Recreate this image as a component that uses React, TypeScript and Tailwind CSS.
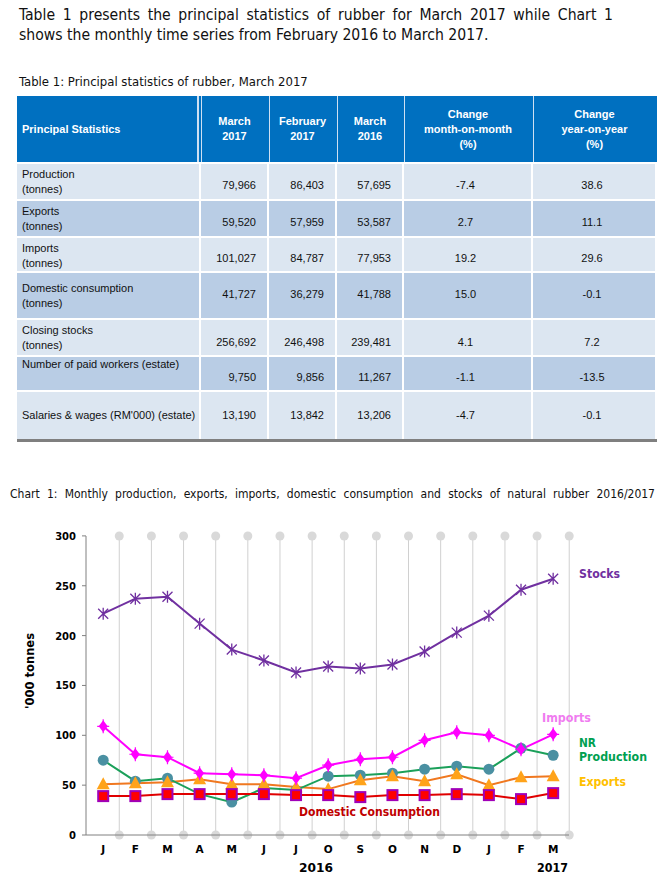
import React from "react";

const TAHOMA = "font-['DejaVu_Sans_Condensed','DejaVu_Sans',sans-serif]";
const ARIAL = "font-['Liberation_Sans',Arial,sans-serif]";

type Row = {
  label: string[];
  vals: string[];
  bg: string;
  h: string;
  lp: string;
  np: string;
};

const rows: Row[] = [
  { label: ["Production", "(tonnes)"], vals: ["79,966", "86,403", "57,695", "-7.4", "38.6"], bg: "bg-[#dce6f1]", h: "h-[35px]", lp: "pt-[3px]", np: "pt-[14px]" },
  { label: ["Exports", "(tonnes)"], vals: ["59,520", "57,959", "53,587", "2.7", "11.1"], bg: "bg-[#b9cde5]", h: "h-[35px]", lp: "pt-[3px]", np: "pt-[14px]" },
  { label: ["Imports", "(tonnes)"], vals: ["101,027", "84,787", "77,953", "19.2", "29.6"], bg: "bg-[#dce6f1]", h: "h-[33px]", lp: "pt-[3px]", np: "pt-[13px]" },
  { label: ["Domestic consumption", "(tonnes)"], vals: ["41,727", "36,279", "41,788", "15.0", "-0.1"], bg: "bg-[#b9cde5]", h: "h-[45px]", lp: "pt-[8px]", np: "pt-[14px]" },
  { label: ["Closing stocks", "(tonnes)"], vals: ["256,692", "246,498", "239,481", "4.1", "7.2"], bg: "bg-[#dce6f1]", h: "h-[35px]", lp: "pt-[3px]", np: "pt-[15px]" },
  { label: ["Number of paid workers (estate)"], vals: ["9,750", "9,856", "11,267", "-1.1", "-13.5"], bg: "bg-[#b9cde5]", h: "h-[33px]", lp: "pt-[0px]", np: "pt-[13px]" },
  { label: ["Salaries & wages (RM'000) (estate)"], vals: ["13,190", "13,842", "13,206", "-4.7", "-0.1"], bg: "bg-[#dce6f1]", h: "h-[47px]", lp: "pt-[16px]", np: "pt-[16px]" },
];

const COLS = "grid grid-cols-[182px_66px_66px_65px_127px_122px] gap-x-[2px]";

function StatsTable() {
  return (
    <div className={`ml-[17px] w-[640px] ${ARIAL} text-[11px] leading-[15px]`}>
      <div className="flex flex-col gap-y-[2px] bg-white">
        <div className={`${COLS} h-[66px] bg-[#0070c0] gap-x-[2px]`}>
          <div className="flex items-center pl-[5px] font-bold text-white bg-[#0070c0] border-r-2 border-[#cfe0f2]">Principal Statistics</div>
          {[["March", "2017"], ["February", "2017"], ["March", "2016"], ["Change", "month-on-month", "(%)"], ["Change", "year-on-year", "(%)"]].map((h, i) => (
            <div key={i} className="flex flex-col items-center justify-center text-center font-bold text-white border-l border-[#cfe0f2]">
              {h.map((t) => (
                <span key={t}>{t}</span>
              ))}
            </div>
          ))}
        </div>
        {rows.map((r) => (
          <div key={r.label[0]} className={`${COLS} ${r.h} text-[#111]`}>
            <div className={`${r.bg} pl-[5px] ${r.lp} flex flex-col`}>
              {r.label.map((l) => (
                <span key={l}>{l}</span>
              ))}
            </div>
            {r.vals.map((v, i) => (
              <div key={i} className={`${r.bg} ${r.np} ${i < 3 ? "text-right pr-[11px]" : "text-center pr-[4px]"}`}>
                {v}
              </div>
            ))}
          </div>
        ))}
      </div>
      <div className="h-[3px] bg-[#7f7f7f]" />
    </div>
  );
}

const X0 = 103.2;
const DX = 32.14;
const Y0 = 834;
const px = (i: number) => X0 + DX * i;
const py = (v: number) => Y0 - v * 0.997;

const stocks = [222, 237, 239, 212, 186, 175, 163, 169, 167, 171, 184, 203, 220, 246, 257];
const imports = [109, 81, 78, 62, 61, 60, 57, 70, 76, 78, 95, 103, 100, 86, 101];
const nrProd = [75, 54, 57, 41, 33, 47, 45, 59, 60, 62, 66, 69, 66, 87, 80];
const exportsS = [51, 52, 53, 56, 51, 51, 48, 46, 55, 59, 54, 61, 50, 58, 59];
const domestic = [39, 39, 41, 41, 41, 41, 40, 40, 38, 40, 40, 41, 40, 36, 42];
const months = ["J", "F", "M", "A", "M", "J", "J", "O", "S", "O", "N", "D", "J", "F", "M"];

const pts = (d: number[]) => d.map((v, i) => `${px(i).toFixed(1)},${py(v).toFixed(1)}`).join(" ");

function Chart() {
  const grid = Array.from({ length: 15 }, (_, i) => px(i) + DX / 2);
  const ticks = [0, 50, 100, 150, 200, 250, 300];
  const font = "DejaVu Sans, Verdana, sans-serif";
  return (
    <svg width={665} height={378} viewBox="0 501 665 378" className="block">
      {grid.map((x, i) => (
        <g key={i}>
          <line x1={x} y1={535} x2={x} y2={834} stroke="#d0d0d0" strokeWidth={1} />
          <circle cx={x} cy={535} r={4.5} fill="#d9d9d9" />
          <circle cx={x} cy={834} r={4.5} fill="#d9d9d9" />
        </g>
      ))}
      <line x1={86} y1={535} x2={86} y2={834} stroke="#808080" strokeWidth={1} />
      <line x1={86} y1={834} x2={569} y2={834} stroke="#808080" strokeWidth={1} />
      {ticks.map((t) => (
        <g key={t}>
          <line x1={82} y1={py(t)} x2={86} y2={py(t)} stroke="#808080" />
          <text
            x={76}
            y={py(t) + 4}
            textAnchor="end"
            fontFamily={font}
            fontWeight="bold"
            fontSize={10}
            fill="#000"
          >
            {t}
          </text>
        </g>
      ))}
      {months.map((m, i) => (
        <text key={i} x={px(i)} y={852} textAnchor="middle" fontFamily={font} fontWeight="bold" fontSize={10.5} fill="#000">
          {m}
        </text>
      ))}
      <text x={299} y={871} fontFamily={font} fontWeight="bold" fontSize={12} textLength={34} lengthAdjust="spacingAndGlyphs">2016</text>
      <text x={537} y={871} fontFamily={font} fontWeight="bold" fontSize={12} textLength={31} lengthAdjust="spacingAndGlyphs">2017</text>
      <text
        x={30}
        y={674}
        transform="rotate(-90 30 670)"
        textAnchor="middle"
        fontFamily={font}
        fontWeight="bold"
        fontSize={12}
        textLength={76}
        lengthAdjust="spacingAndGlyphs"
      >
        '000 tonnes
      </text>

      {/* stocks */}
      <polyline points={pts(stocks)} fill="none" stroke="#7030a0" strokeWidth={2} />
      {stocks.map((v, i) => {
        const x = px(i);
        const y = py(v);
        return (
          <path key={i} d={`M${x - 5} ${y - 5}L${x + 5} ${y + 5}M${x - 5} ${y + 5}L${x + 5} ${y - 5}M${x} ${y - 6}L${x} ${y + 6}`} stroke="#7030a0" strokeWidth={1.3} />
        );
      })}

      <polyline points={pts(exportsS)} fill="none" stroke="#f07820" strokeWidth={2} />
      <polyline points={pts(nrProd)} fill="none" stroke="#1ba05a" strokeWidth={2} />
      <polyline points={pts(domestic)} fill="none" stroke="#e00000" strokeWidth={2} />
      <polyline points={pts(imports)} fill="none" stroke="#ff00ff" strokeWidth={2} />

      {nrProd.map((v, i) => (
        <circle key={i} cx={px(i)} cy={py(v)} r={5.5} fill="#4a90a2" />
      ))}
      {exportsS.map((v, i) => {
        const x = px(i);
        const y = py(v);
        return <polygon key={i} points={`${x},${y - 7} ${x + 6.5},${y + 5} ${x - 6.5},${y + 5}`} fill="#ffa31a" />;
      })}
      {domestic.map((v, i) => (
        <rect key={i} x={px(i) - 5} y={py(v) - 5} width={10} height={10} fill="#ff0000" stroke="#a000b8" strokeWidth={2} />
      ))}
      {imports.map((v, i) => {
        const x = px(i);
        const y = py(v);
        return (
          <g key={i}>
            <polygon points={`${x},${y - 6} ${x + 4.5},${y} ${x},${y + 6} ${x - 4.5},${y}`} fill="#ff00ff" />
            <path d={`M${x - 6} ${y}L${x + 6} ${y}M${x} ${y - 7}L${x} ${y + 7}`} stroke="#ff00ff" strokeWidth={1.2} />
          </g>
        );
      })}

      <text x={579} y={577} fontFamily={font} fontWeight="bold" fontSize={12.5} fill="#7030a0" textLength={41} lengthAdjust="spacingAndGlyphs">Stocks</text>
      <text x={542} y={721} fontFamily={font} fontWeight="bold" fontSize={12.5} fill="#f07cf0" textLength={49} lengthAdjust="spacingAndGlyphs">Imports</text>
      <text x={579} y={746} fontFamily={font} fontWeight="bold" fontSize={12.5} fill="#00a050" textLength={17} lengthAdjust="spacingAndGlyphs">NR</text>
      <text x={579} y={760} fontFamily={font} fontWeight="bold" fontSize={12.5} fill="#00a050" textLength={68} lengthAdjust="spacingAndGlyphs">Production</text>
      <text x={579} y={785} fontFamily={font} fontWeight="bold" fontSize={12.5} fill="#ffc000" textLength={47} lengthAdjust="spacingAndGlyphs">Exports</text>
      <text x={299} y={815} fontFamily={font} fontWeight="bold" fontSize={12.5} fill="#c00000" textLength={141} lengthAdjust="spacingAndGlyphs">Domestic Consumption</text>
    </svg>
  );
}

export default function App() {
  return (
    <div className="w-[665px] h-[879px] bg-white overflow-hidden text-black">
      <p className={`ml-[19px] mt-[5px] w-[594px] text-justify ${TAHOMA} text-[15.6px] leading-[20px] text-[#111]`}>
        Table 1 presents the principal statistics of rubber for March 2017 while Chart 1 shows the monthly time series from February 2016 to March 2017.
      </p>
      <p className={`ml-[19px] mt-[29px] ${TAHOMA} text-[13px] leading-[16px] text-[#111]`}>
        Table 1: Principal statistics of rubber, March 2017
      </p>
      <div className="mt-[6px]">
        <StatsTable />
      </div>
      <p className={`ml-[10px] mt-[44px] w-[645px] whitespace-nowrap text-justify [text-align-last:justify] ${TAHOMA} text-[12px] leading-[16px] text-[#111]`}>
        Chart 1: Monthly production, exports, imports, domestic consumption and stocks of natural rubber 2016/2017
      </p>
      <Chart />
    </div>
  );
}
